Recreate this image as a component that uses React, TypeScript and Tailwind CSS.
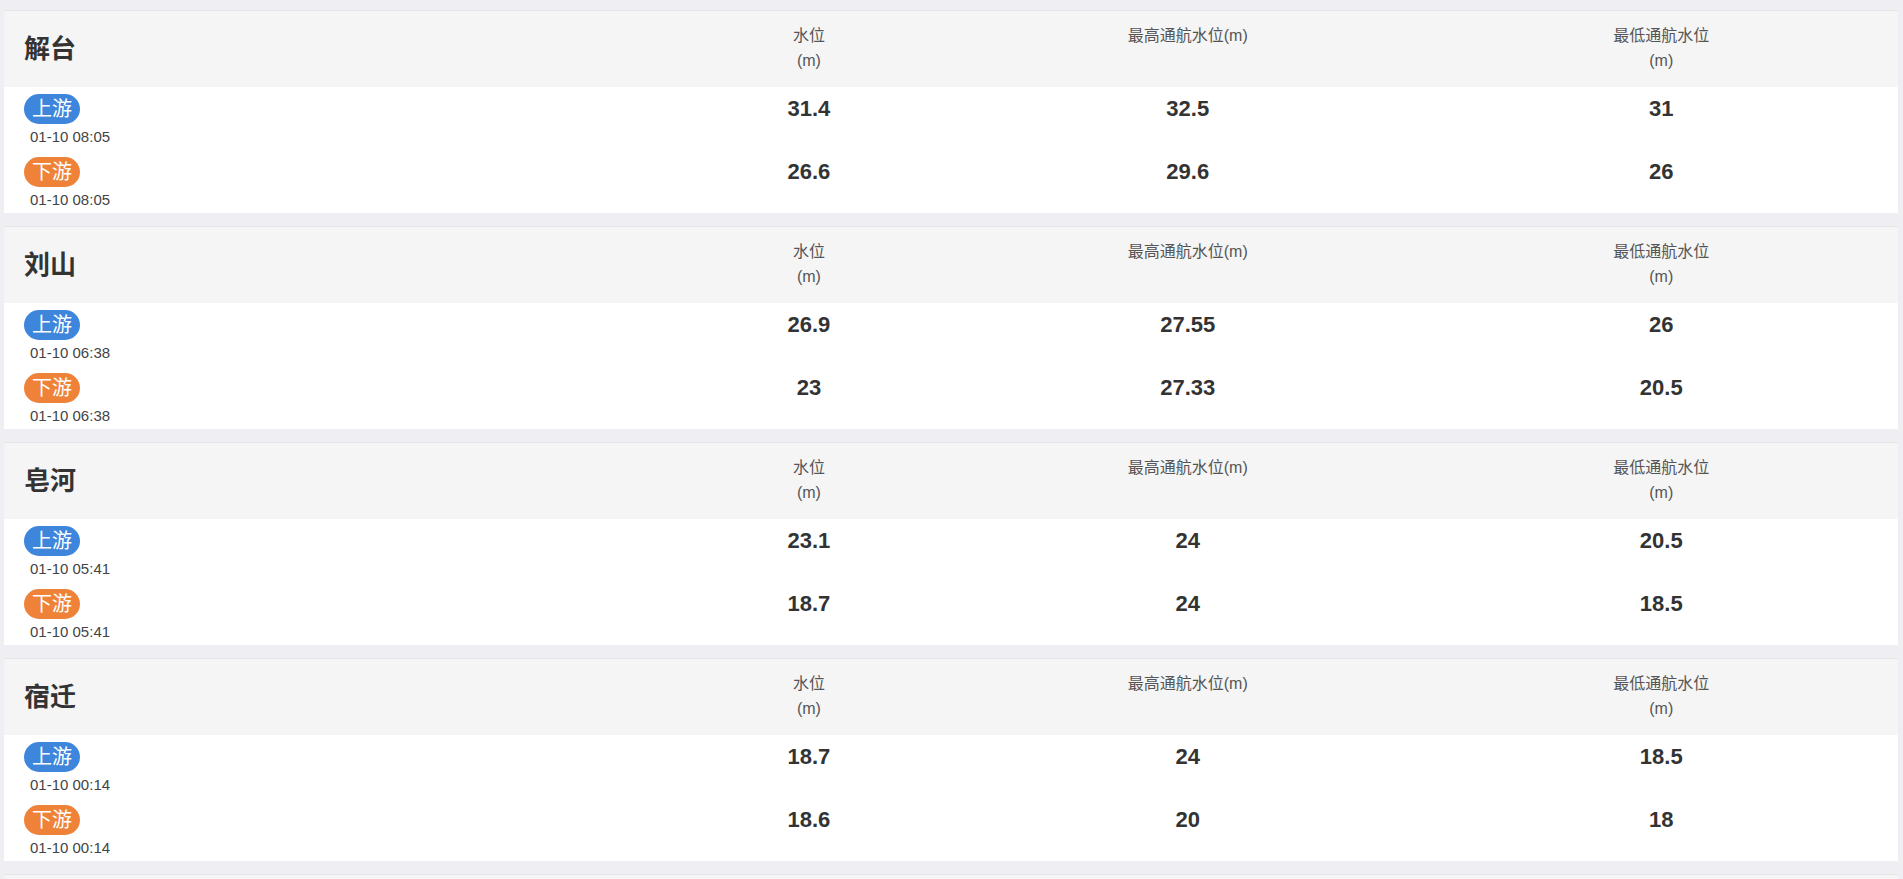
const stations = [
  {
    name: '解台',
    rows: [
      { dir: '上游', time: '01-10 08:05', level: '31.4', max: '32.5', min: '31' },
      { dir: '下游', time: '01-10 08:05', level: '26.6', max: '29.6', min: '26' },
    ],
  },
  {
    name: '刘山',
    rows: [
      { dir: '上游', time: '01-10 06:38', level: '26.9', max: '27.55', min: '26' },
      { dir: '下游', time: '01-10 06:38', level: '23', max: '27.33', min: '20.5' },
    ],
  },
  {
    name: '皂河',
    rows: [
      { dir: '上游', time: '01-10 05:41', level: '23.1', max: '24', min: '20.5' },
      { dir: '下游', time: '01-10 05:41', level: '18.7', max: '24', min: '18.5' },
    ],
  },
  {
    name: '宿迁',
    rows: [
      { dir: '上游', time: '01-10 00:14', level: '18.7', max: '24', min: '18.5' },
      { dir: '下游', time: '01-10 00:14', level: '18.6', max: '20', min: '18' },
    ],
  },
]

function Station({ station }: { station: (typeof stations)[number] }) {
  return (
    <div className="border-t border-[#e6e6e9] bg-white">
      {/* header */}
      <div className="flex h-[76px] bg-[#f5f5f6] text-[16px] leading-[25px] text-[#555]">
        <div className="flex w-[35%] items-center pl-[20px]">
          <h2 className="text-[26px] font-bold text-[#333]">{station.name}</h2>
        </div>
        <div className="w-[15%] pt-[12px] text-center">
          水位
          <br />
          (m)
        </div>
        <div className="w-[25%] pt-[12px] text-center">最高通航水位(m)</div>
        <div className="w-[25%] pt-[12px] text-center">
          最低通航水位
          <br />
          (m)
        </div>
      </div>

      {/* rows */}
      {station.rows.map((row) => (
        <div key={row.dir} className="flex h-[63px] text-[#333]">
          <div className="w-[35%] pl-[20px] pt-[7px]">
            <span
              className={
                row.dir === '上游'
                  ? 'inline-block h-[30px] rounded-full bg-[#3d86db] px-[8px] text-[20px] leading-[30px] text-white'
                  : 'inline-block h-[30px] rounded-full bg-[#ef8239] px-[8px] text-[20px] leading-[30px] text-white'
              }
            >
              {row.dir}
            </span>
            <div className="mt-[3px] pl-[6px] text-[15px] leading-[20px] text-[#444]">{row.time}</div>
          </div>
          <div className="w-[15%] pt-[7px] text-center text-[22px] font-bold leading-[30px]">{row.level}</div>
          <div className="w-[25%] pt-[7px] text-center text-[22px] font-bold leading-[30px]">{row.max}</div>
          <div className="w-[25%] pt-[7px] text-center text-[22px] font-bold leading-[30px]">{row.min}</div>
        </div>
      ))}
    </div>
  )
}

export default function App() {
  return (
    <div
      className="h-[879px] overflow-hidden bg-[#eeeef3] pl-[4px] pr-[5px] pt-[10px]"
      style={{ fontFamily: '"Liberation Sans", "Noto Sans CJK SC", sans-serif' }}
    >
      <div className="flex flex-col gap-[13px]">
        {stations.map((s) => (
          <Station key={s.name} station={s} />
        ))}
        {/* next station, its header just below the fold */}
        <div className="h-[76px] border-t border-[#e6e6e9] bg-[#f5f5f6]" />
      </div>
    </div>
  )
}
